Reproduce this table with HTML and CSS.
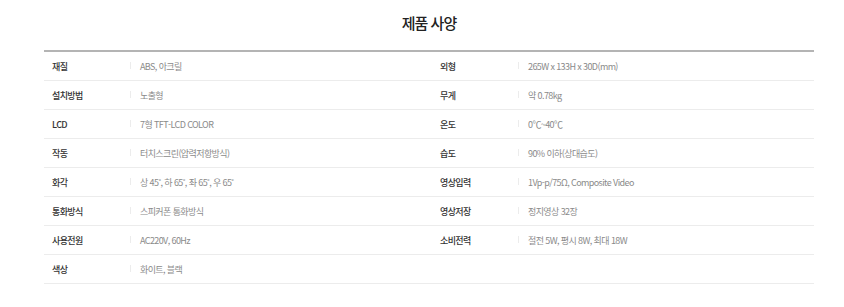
FILE: index.html
```html
<!DOCTYPE html>
<html lang="ko">
<head>
<meta charset="utf-8">
<title>제품 사양</title>
<link rel="stylesheet" href="styles.css">
</head>
<body>
<section class="spec">
  <h2 class="spec-title">제품 사양</h2>
  <div class="spec-table">
    <div class="cell label">재질</div><div class="cell value">ABS, 아크릴</div>
    <div class="cell label">외형</div><div class="cell value">265W x 133H x 30D(mm)</div>
    <div class="cell label">설치방법</div><div class="cell value">노출형</div>
    <div class="cell label">무게</div><div class="cell value">약 0.78kg</div>
    <div class="cell label">LCD</div><div class="cell value">7형 TFT-LCD COLOR</div>
    <div class="cell label">온도</div><div class="cell value">0℃~40℃</div>
    <div class="cell label">작동</div><div class="cell value">터치스크린(압력저항방식)</div>
    <div class="cell label">습도</div><div class="cell value">90% 이하(상대습도)</div>
    <div class="cell label">화각</div><div class="cell value">상 45˚, 하 65˚, 좌 65˚, 우 65˚</div>
    <div class="cell label">영상입력</div><div class="cell value">1Vp-p/75Ω, Composite Video</div>
    <div class="cell label">통화방식</div><div class="cell value">스피커폰 통화방식</div>
    <div class="cell label">영상저장</div><div class="cell value">정지영상 32장</div>
    <div class="cell label">사용전원</div><div class="cell value">AC220V, 60Hz</div>
    <div class="cell label">소비전력</div><div class="cell value">절전 5W, 평시 8W, 최대 18W</div>
    <div class="cell label">색상</div><div class="cell value">화이트, 블랙</div>
    <div class="cell label"></div><div class="cell value empty"></div>
  </div>
</section>
</body>
</html>
```

FILE: styles.css
```css
html, body {
  margin: 0;
  padding: 0;
  background: #fff;
}
body {
  font-family: "Noto Sans CJK KR", "Noto Sans", sans-serif;
}
.spec {
  width: 770px;
  padding-left: 44px;
}
.spec-title {
  margin: 0;
  padding-top: 13px;
  height: 50px;
  box-sizing: border-box;
  text-align: center;
  font-size: 15px;
  line-height: 20px;
  font-weight: 500;
  color: #222;
  letter-spacing: -1px;
}
.spec-table {
  display: grid;
  grid-template-columns: 86px 302px 86px 1fr;
  border-top: 2px solid #b4b4b4;
}
.cell {
  height: 28px;
  border-bottom: 1px solid #ececec;
  display: flex;
  align-items: center;
  font-size: 9px;
  letter-spacing: -0.6px;
  white-space: nowrap;
}
.label {
  padding-left: 8px;
  color: #333;
  font-weight: 500;
}
.value {
  position: relative;
  padding-left: 10px;
  color: #8a8a8a;
}
.value::before {
  content: "";
  position: absolute;
  left: 0;
  top: 10px;
  width: 1px;
  height: 7px;
  background: #ececec;
}
.value.empty::before {
  display: none;
}
```
